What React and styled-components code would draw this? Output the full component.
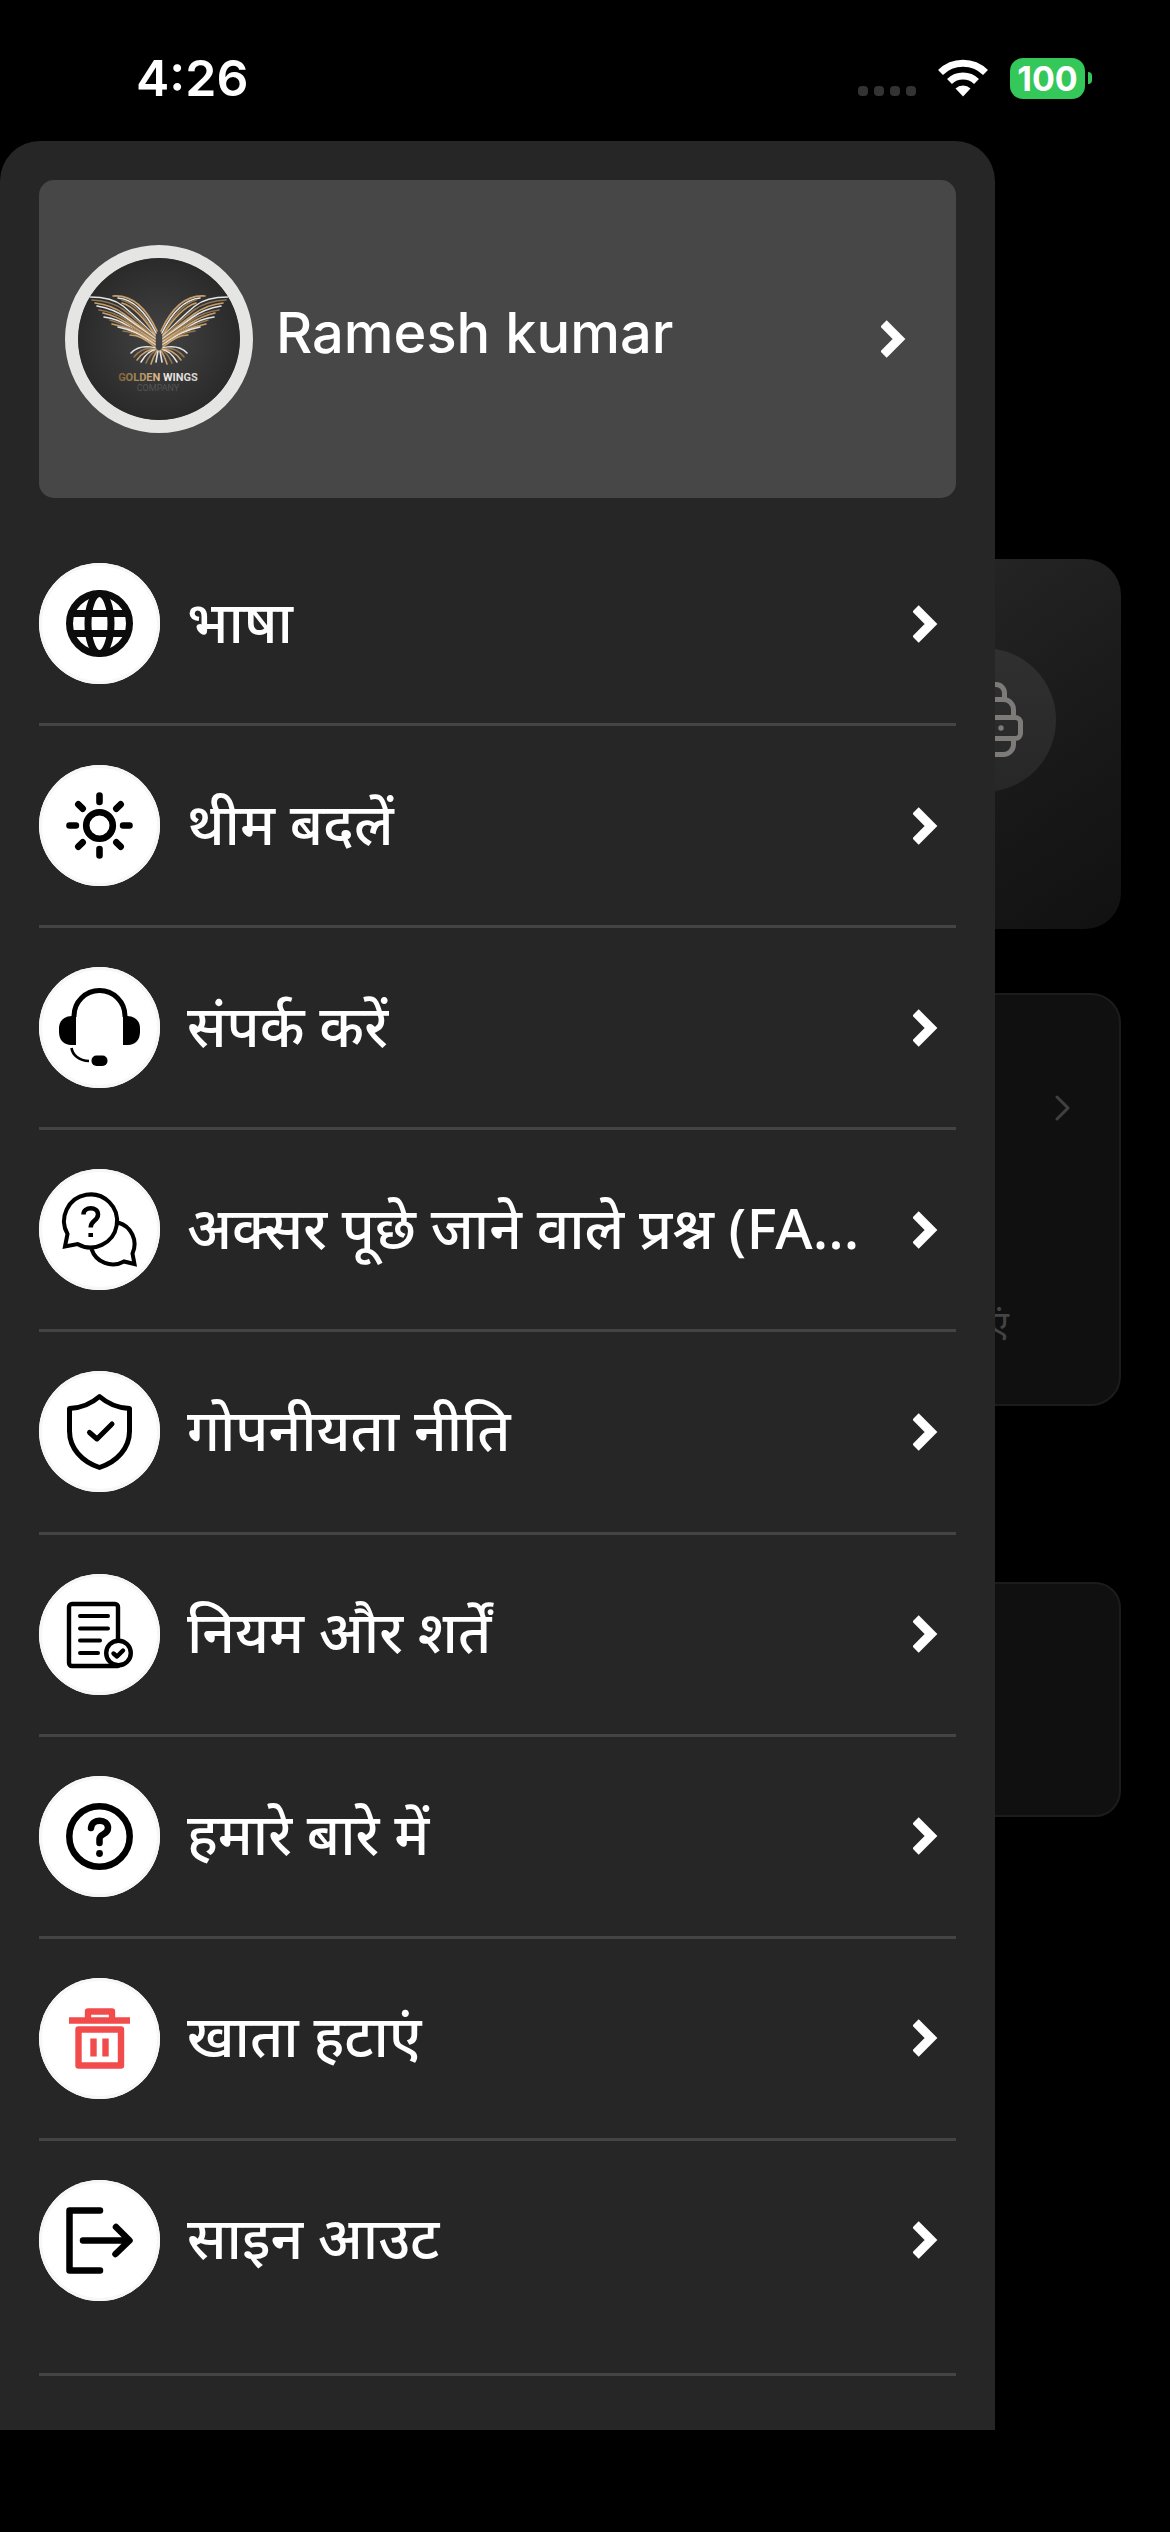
import React from "react";
import styled, { createGlobalStyle } from "styled-components";

const GlobalStyle = createGlobalStyle`
  * {
    box-sizing: border-box;
  }
  body {
    margin: 0;
    background-color: #000000;
    color: white;
    font-family: "Inter", "Noto Sans", sans-serif;
  }
`;

function GlobeIcon() {
  return (
    <svg viewBox="0 0 121 121" fill="none" stroke="#0c0c0c" strokeWidth="7">
      <circle cx="60.5" cy="60.5" r="30" />
      <ellipse cx="60.5" cy="60.5" rx="11.5" ry="30" />
      <path d="M34 50.5h53M34 70.5h53" />
    </svg>
  );
}

function SunIcon() {
  return (
    <svg viewBox="0 0 121 121" fill="none" stroke="#000" strokeWidth="6.6" strokeLinecap="round">
      <circle cx="60.5" cy="60.5" r="13.3" />
      <path d="M60.5 30.5v6.4M60.5 84.1v6.4M30.5 60.5h6.4M84.1 60.5h6.4M39.3 39.3l4.4 4.4M77.3 77.3l4.4 4.4M39.3 81.7l4.4-4.4M77.3 43.7l4.4-4.4" />
    </svg>
  );
}

function HeadsetIcon() {
  return (
    <svg viewBox="0 0 121 121" fill="none">
      <path d="M35 50V49a25.5 25.5 0 0 1 51 0v1" stroke="#000" strokeWidth="5" />
      <path d="M37 49h-4c-8 0-13 5-13 12v4c0 8 5 13 12 13h5z" fill="#000" />
      <path d="M84 49h4c8 0 13 5 13 12v4c0 8-5 13-12 13h-5z" fill="#000" />
      <path d="M32.5 81c1 7 7.500 12.500 17.500 13" stroke="#000" strokeWidth="2.6" />
      <rect x="52.500" y="88.500" width="16" height="10.500" rx="5" fill="#000" />
    </svg>
  );
}

function FaqIcon() {
  return (
    <svg viewBox="0 0 121 121" fill="none" stroke="#000" strokeWidth="4">
      <path d="M26 77.500l2.500-12.500A26.500 26.500 0 1 1 38.500 75z" />
      <path d="M79 53.500A22.500 22.500 0 0 1 93.500 84.500l2 10.500-10.500-2.500A22.500 22.500 0 0 1 52.500 80" />
      <path d="M44.500 45.500c0-8.500 14.500-8.500 14.500 0 0 6.500-7.300 5.500-7.300 13" strokeWidth="4.500" />
      <path d="M49.400 66h4.600" strokeWidth="4" />
    </svg>
  );
}

function ShieldIcon() {
  return (
    <svg viewBox="0 0 121 121" fill="none" stroke="#000" strokeWidth="5" strokeLinejoin="round" strokeLinecap="round">
      <path d="M60.500 25.500C52 33 42.500 37 30.500 37.500V60c0 17 12 30.500 30 36.500 18-6 30-19.500 30-36.500V37.500C78.500 37 69 33 60.500 25.500z" />
      <path d="M50.500 61.500l7.500 6.500L73 53" />
    </svg>
  );
}

function TermsIcon() {
  return (
    <svg viewBox="0 0 121 121" fill="none" stroke="#000" strokeWidth="4.400" strokeLinecap="round" strokeLinejoin="round">
      <path d="M79 66V33a3 3 0 0 0-3-3H33a3 3 0 0 0-3 3v56a3 3 0 0 0 3 3h46" />
      <circle cx="79.500" cy="79" r="12.300" />
      <path d="M41 42h28M41 54.500h28M41 66.500h20M41 79h18" strokeWidth="4" />
      <path d="M74.500 79.500l3.500 3 6-6" />
    </svg>
  );
}

function AboutIcon() {
  return (
    <svg viewBox="0 0 121 121" fill="none" stroke="#000" strokeWidth="6.500" strokeLinecap="round" strokeLinejoin="round">
      <circle cx="60.500" cy="60.500" r="30.200" />
      <path d="M52 52c1-10 17-9.500 17 0 0 7-8.500 5.500-8.500 11v4" />
      <circle cx="60.500" cy="77.500" r="3.400" fill="#000" stroke="none" />
    </svg>
  );
}

function TrashIcon() {
  return (
    <svg viewBox="0 0 121 121" fill="none" stroke="#f24b4b" strokeWidth="6.400" strokeLinejoin="round">
      <path d="M30 42.500h61" />
      <path d="M49 42v-8.500h24V42" />
      <rect x="39.500" y="51.500" width="42.500" height="36" />
      <path d="M54.500 60.500v18M66.500 60.500v18" />
    </svg>
  );
}

function SignOutIcon() {
  return (
    <svg viewBox="0 0 121 121" fill="none" stroke="#000" strokeWidth="6.500" strokeLinecap="round" strokeLinejoin="round">
      <path d="M61 30.500H30.500v60H61" />
      <path d="M44 60.500h46M77 47l13.500 13.500L76.500 74" />
    </svg>
  );
}

const featherPaths = [
  "M35 38Q62 36 79 73",
  "M40 40Q62 42 78 75",
  "M44 42Q60 46 77 76",
  "M44 45Q60 50 77 77",
  "M12 39Q34 39 45 48T77 78",
  "M14 42Q34 43 46 52T77 79",
  "M17 45Q34 47 46 56T77 80",
  "M19 48Q36 51 47 59T77 81",
  "M21 52Q36 54 48 62T77 82",
  "M25 55Q38 58 49 65T77 83",
  "M26 59Q40 61 50 68T77 84",
  "M32 62Q42 65 52 70T77 85",
  "M34 66Q44 68 54 72T77 86",
  "M40 69Q50 71 58 75T77 87",
  "M45 73Q54 74 61 78T77 88",
  "M52 77Q58 77 64 80T77 89",
  "M77 90Q62 86 53 95",
  "M77 91Q65 88 56 99",
  "M78 91Q67 91 59 102",
  "M78 92Q70 92 63 104",
  "M79 92Q73 94 68 105",
  "M79 93Q76 97 73 106",
  "M80 93Q79 98 78 104",
];

const featherColors = ["#c9a06b", "#e4e4e4", "#8f7550"];

function Wing() {
  return featherPaths.map((d, i) => (
    <path key={d} d={d} stroke={featherColors[i % 3]} />
  ));
}

function WingsLogo() {
  return (
    <svg viewBox="0 0 162 162" role="img" aria-label="Golden Wings Company">
      <defs>
        <radialGradient id="disc">
          <stop offset="0" stopColor="#434343" />
          <stop offset="1" stopColor="#2a2a2a" />
        </radialGradient>
        <linearGradient id="gold" x1="0" x2="1" y1="0" y2="0">
          <stop offset="0" stopColor="#7d6033" />
          <stop offset="0.5" stopColor="#d9b98a" />
          <stop offset="0.6" stopColor="#ededed" />
          <stop offset="1" stopColor="#d2d2d2" />
        </linearGradient>
      </defs>
      <circle cx="81" cy="81" r="81" fill="url(#disc)" />
      <g fill="none" strokeWidth="1.600" strokeLinecap="round">
        <Wing />
        <g transform="translate(162 0) scale(-1 1)">
          <Wing />
        </g>
      </g>
      <text x="80" y="123" textAnchor="middle" fontFamily="Roboto" fontWeight="700" fontSize="11" fill="url(#gold)">GOLDEN WINGS</text>
      <text x="80" y="133" textAnchor="middle" fontFamily="Roboto" fontSize="9" fill="#545454">COMPANY</text>
    </svg>
  );
}

function Chevron() {
  return (
    <ChevronSvg viewBox="0 0 27 40" aria-hidden="true">
      <path d="M2.500 4.500L18 20 2.500 35.500" fill="none" stroke="white" strokeWidth="9" />
    </ChevronSvg>
  );
}

const menu = [
  { label: "भाषा", Icon: GlobeIcon },
  { label: "थीम बदलें", Icon: SunIcon },
  { label: "संपर्क करें", Icon: HeadsetIcon },
  { label: "अक्सर पूछे जाने वाले प्रश्न (FA...", Icon: FaqIcon },
  { label: "गोपनीयता नीति", Icon: ShieldIcon },
  { label: "नियम और शर्तें", Icon: TermsIcon },
  { label: "हमारे बारे में", Icon: AboutIcon },
  { label: "खाता हटाएं", Icon: TrashIcon },
  { label: "साइन आउट", Icon: SignOutIcon },
];

export default function App() {
  return (
    <>
      <GlobalStyle />
      <Screen>
        <StatusBar>
          <Time>4:26</Time>
          <StatusIcons>
            <Dots>
              <i /><i /><i /><i />
            </Dots>
            <WifiSvg viewBox="0 0 50 38" aria-hidden="true">
              <path d="M25 37.500L17.500 29.500a11 11 0 0 1 15 0z" fill="white" />
              <path d="M11.500 22.500a19.500 19.500 0 0 1 27 0" fill="none" stroke="white" strokeWidth="7" />
              <path d="M2.500 13.500a32 32 0 0 1 45 0" fill="none" stroke="white" strokeWidth="7" />
            </WifiSvg>
            <Battery>
              <Level>100</Level>
              <Cap />
            </Battery>
          </StatusIcons>
        </StatusBar>
        <Body>
          <Home aria-hidden="true">
            <LockerCard>
              <LockerDisc>
                <svg viewBox="0 0 78 78" fill="none" stroke="#7c7b78" strokeWidth="5">
                  <path d="M18.500 18v-6a8.500 8.500 0 0 1 8.500-8.500h24a8.500 8.500 0 0 1 8.500 8.500v6" />
                  <path d="M9.500 36v-7.500a10 10 0 0 1 10-10h39a10 10 0 0 1 10 10V36" />
                  <rect x="2.500" y="36.500" width="73" height="21" rx="5" />
                  <path d="M47.500 36.500v21" />
                  <path d="M9.500 57.500v6a10 10 0 0 0 10 10h39a10 10 0 0 0 10-10v-6" />
                  <circle cx="56" cy="47" r="2.700" fill="#7c7b78" stroke="none" />
                </svg>
              </LockerDisc>
            </LockerCard>
            <InfoCard>
              <svg viewBox="0 0 16 26" fill="none" stroke="#404040" strokeWidth="3" strokeLinecap="round" strokeLinejoin="round">
                <path d="M2 2l11 11L2 24" />
              </svg>
              <span>बनाएं</span>
            </InfoCard>
            <PlainCard />
          </Home>
          <Drawer>
            <Profile type="button">
              <Avatar>
                <WingsLogo />
              </Avatar>
              <Name>Ramesh kumar</Name>
              <Chevron />
            </Profile>
            <Menu>
              {menu.map(({ label, Icon }) => (
                <li key={label}>
                  <MenuItem type="button">
                    <IconDisc>
                      <Icon />
                    </IconDisc>
                    <Label>{label}</Label>
                    <Chevron />
                  </MenuItem>
                </li>
              ))}
            </Menu>
            <Divider />
          </Drawer>
        </Body>
      </Screen>
    </>
  );
}

const Screen = styled.div`
  min-height: 100vh;
  display: flex;
  flex-direction: column;
  padding-bottom: 102px;
`;

const StatusBar = styled.header`
  height: 141px;
  display: flex;
  align-items: center;
  justify-content: space-between;
  padding: 15px 78px 0 136px;
`;

const Time = styled.span`
  font-size: 50px;
  font-weight: 600;
`;

const StatusIcons = styled.div`
  display: flex;
  align-items: center;
  gap: 22px;
`;

const Dots = styled.div`
  display: flex;
  gap: 6px;
  padding-top: 26px;
  i {
    width: 10px;
    height: 10px;
    border-radius: 4px;
    background-color: #333333;
  }
`;

const WifiSvg = styled.svg`
  width: 50px;
  height: 38px;
`;

const Battery = styled.div`
  display: flex;
  align-items: center;
  gap: 3px;
`;

const Level = styled.span`
  width: 75px;
  height: 41px;
  border-radius: 13px;
  background-color: #34c759;
  font-size: 34px;
  font-weight: 700;
  line-height: 41px;
  text-align: center;
`;

const Cap = styled.span`
  width: 4px;
  height: 12px;
  border-radius: 0 4px 4px 0;
  background-color: #34c759;
`;

/* the drawer and the dimmed home screen share one grid cell */
const Body = styled.div`
  flex: 1;
  display: grid;
`;

const Home = styled.div`
  grid-area: 1 / 1;
  display: flex;
  flex-direction: column;
  padding: 418px 49px 0;
`;

const LockerCard = styled.div`
  height: 370px;
  display: flex;
  align-items: center;
  justify-content: flex-end;
  padding: 0 65px 48px 0;
  border-radius: 36px;
  background: linear-gradient(145deg, #262626 55%, #191919 80%, #111111);
`;

const LockerDisc = styled.div`
  width: 144px;
  height: 144px;
  display: flex;
  align-items: center;
  justify-content: center;
  border-radius: 50%;
  background: linear-gradient(#303030, #272727);
  svg {
    width: 78px;
    height: 78px;
  }
`;

const InfoCard = styled.div`
  height: 413px;
  margin-top: 64px;
  display: flex;
  flex-direction: column;
  align-items: flex-end;
  justify-content: space-between;
  padding: 100px 48px 56px;
  border: 2px solid #1c1c1c;
  border-radius: 30px;
  background-color: #101010;
  svg {
    width: 16px;
    height: 26px;
  }
  span {
    padding-right: 62px;
    color: #444444;
    font-size: 36px;
  }
`;

const PlainCard = styled.div`
  height: 235px;
  margin-top: 176px;
  border: 2px solid #1c1c1c;
  border-radius: 26px;
  background-color: #101010;
`;

const Drawer = styled.nav`
  grid-area: 1 / 1;
  z-index: 1;
  width: 85%;
  display: flex;
  flex-direction: column;
  padding: 39px 39px 54px;
  border-radius: 40px 40px 0 0;
  background-color: #262626;
`;

const Profile = styled.button`
  height: 318px;
  display: flex;
  align-items: center;
  gap: 23px;
  padding: 0 48px 0 26px;
  border: none;
  border-radius: 15px;
  background-color: #474747;
  color: white;
  font-family: inherit;
  text-align: left;
  cursor: pointer;
`;

const Avatar = styled.span`
  width: 188px;
  height: 188px;
  flex-shrink: 0;
  border: 13px solid #e5e5e4;
  border-radius: 50%;
  overflow: hidden;
  svg {
    display: block;
    width: 100%;
    height: 100%;
  }
`;

const Name = styled.span`
  flex: 1;
  padding-bottom: 12px;
  font-size: 56px;
  font-weight: 500;
`;

const ChevronSvg = styled.svg`
  width: 27px;
  height: 40px;
  flex-shrink: 0;
`;

const Menu = styled.ul`
  flex: 1;
  display: grid;
  grid-auto-rows: 1fr;
  margin: 26px 0 30px;
  padding: 0;
  list-style: none;
  li {
    display: flex;
    border-bottom: 3px solid #444444;
  }
  li:last-child {
    border-color: transparent;
  }
`;

const MenuItem = styled.button`
  flex: 1;
  min-width: 0;
  display: flex;
  align-items: center;
  gap: 27px;
  padding: 24px 16px 24px 0;
  border: none;
  background: none;
  color: white;
  font-family: inherit;
  text-align: left;
  cursor: pointer;
`;

const IconDisc = styled.span`
  width: 121px;
  height: 121px;
  flex-shrink: 0;
  border-radius: 50%;
  background-color: white;
  box-shadow: inset 0 0 0 3px #f7f7f7;
  svg {
    display: block;
    width: 100%;
    height: 100%;
  }
`;

const Label = styled.span`
  flex: 1;
  min-width: 0;
  overflow: hidden;
  text-overflow: ellipsis;
  white-space: nowrap;
  padding-bottom: 6px;
  font-family: "Noto Sans", sans-serif;
  font-size: 57px;
  font-weight: 500;
  line-height: 90px;
`;

const Divider = styled.hr`
  width: 100%;
  height: 3px;
  margin: 0;
  border: none;
  background-color: #444444;
`;
